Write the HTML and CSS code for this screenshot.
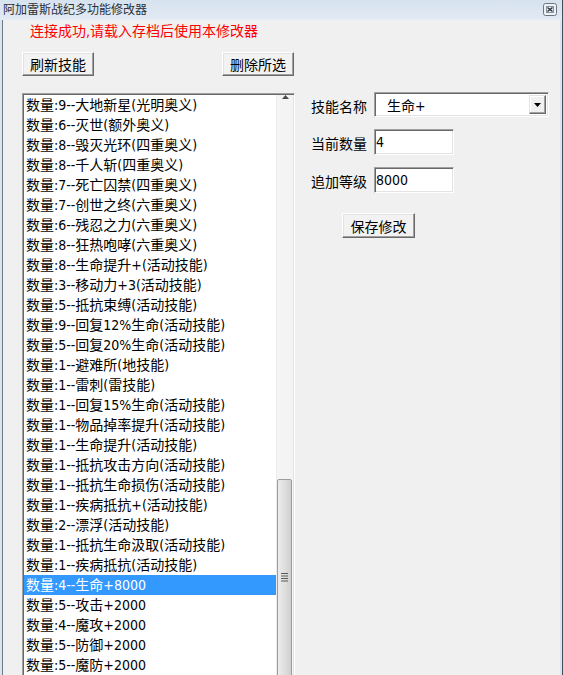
FILE: index.html
```html
<!DOCTYPE html>
<html lang="zh-CN">
<head>
    <meta charset="UTF-8">
    <title>阿加雷斯战纪多功能修改器</title>
    <link rel="stylesheet" href="styles.css">
</head>
<body>
    <div class="window">
        <div class="titlebar">
            <span class="title">阿加雷斯战纪多功能修改器</span>
            <span class="close-btn">
                <svg width="14" height="13" viewBox="0 0 14 13">
                    <rect x="0.5" y="0.5" width="13" height="12" rx="2" fill="#eef2f6" stroke="#6c7682"/>
                    <rect x="3.5" y="3.5" width="7" height="6" fill="none" stroke="#8a939d"/>
                    <path d="M4.5 4.5 L9.5 8.5 M9.5 4.5 L4.5 8.5" stroke="#2f3840" stroke-width="1.6"/>
                </svg>
            </span>
        </div>
        <div class="client">
            <p class="notice">连接成功,请载入存档后使用本修改器</p>
            <div class="toolbar">
                <button class="btn">刷新技能</button>
                <button class="btn">删除所选</button>
            </div>
            <div class="main">
                <div class="listbox">
                    <ul class="items">
                        <li>数量:9--大地新星(光明奥义)</li>
                        <li>数量:6--灭世(额外奥义)</li>
                        <li>数量:8--毁灭光环(四重奥义)</li>
                        <li>数量:8--千人斩(四重奥义)</li>
                        <li>数量:7--死亡囚禁(四重奥义)</li>
                        <li>数量:7--创世之终(六重奥义)</li>
                        <li>数量:6--残忍之力(六重奥义)</li>
                        <li>数量:8--狂热咆哮(六重奥义)</li>
                        <li>数量:8--生命提升+(活动技能)</li>
                        <li>数量:3--移动力+3(活动技能)</li>
                        <li>数量:5--抵抗束缚(活动技能)</li>
                        <li>数量:9--回复12%生命(活动技能)</li>
                        <li>数量:5--回复20%生命(活动技能)</li>
                        <li>数量:1--避难所(地技能)</li>
                        <li>数量:1--雷刺(雷技能)</li>
                        <li>数量:1--回复15%生命(活动技能)</li>
                        <li>数量:1--物品掉率提升(活动技能)</li>
                        <li>数量:1--生命提升(活动技能)</li>
                        <li>数量:1--抵抗攻击方向(活动技能)</li>
                        <li>数量:1--抵抗生命损伤(活动技能)</li>
                        <li>数量:1--疾病抵抗+(活动技能)</li>
                        <li>数量:2--漂浮(活动技能)</li>
                        <li>数量:1--抵抗生命汲取(活动技能)</li>
                        <li>数量:1--疾病抵抗(活动技能)</li>
                        <li class="selected">数量:4--生命+8000</li>
                        <li>数量:5--攻击+2000</li>
                        <li>数量:4--魔攻+2000</li>
                        <li>数量:5--防御+2000</li>
                        <li>数量:5--魔防+2000</li>
                    </ul>
                    <div class="scrollbar">
                        <div class="arrow-up">
                            <svg width="7" height="4" viewBox="0 0 7 4"><path d="M0 4 L3.5 0 L7 4 Z" fill="#4a4a4a"/></svg>
                        </div>
                        <div class="track">
                            <div class="thumb">
                                <svg width="7" height="10" viewBox="0 0 7 10">
                                    <path d="M0 1.5 H7 M0 4 H7 M0 6.5 H7 M0 9 H7" stroke="#5a5a5a" stroke-width="1"/>
                                </svg>
                            </div>
                        </div>
                    </div>
                </div>
                <div class="editor">
                    <span class="label">技能名称</span>
                    <div class="combo">
                        <span class="combo-text">生命+</span>
                        <span class="combo-btn">
                            <svg width="7" height="4" viewBox="0 0 7 4"><path d="M0 0 L7 0 L3.5 4 Z" fill="#000"/></svg>
                        </span>
                    </div>
                    <span class="label">当前数量</span>
                    <input class="field" type="text" value="4">
                    <span class="label">追加等级</span>
                    <input class="field" type="text" value="8000">
                    <button class="btn save-btn">保存修改</button>
                </div>
            </div>
        </div>
    </div>
</body>
</html>
```

FILE: styles.css
```css
* {
    margin: 0;
    padding: 0;
    box-sizing: border-box;
}

body {
    width: 563px;
    height: 675px;
    overflow: hidden;
    font-family: "DejaVu Sans Condensed", "Noto Sans CJK SC", sans-serif;
    font-size: 14px;
    color: #000;
    background: #f0f0f0;
}

.window {
    display: flex;
    flex-direction: column;
    height: 675px;
    background: #dbe5ef;
    border-right: 1px solid #434d57;
    overflow: hidden;
}

.titlebar {
    height: 20px;
    flex: none;
    display: flex;
    align-items: center;
    justify-content: space-between;
    padding: 0 5px 0 3px;
    background: linear-gradient(to bottom, #d6e2ee, #e3ebf4);
}

.title {
    font-size: 12px;
    line-height: 20px;
    color: #2a3038;
}

.close-btn {
    display: flex;
    margin-top: -1px;
}

.client {
    flex: 1;
    margin: 0 2px 0 2px;
    border-left: 1px solid #6f7a85;
    padding-left: 19px;
    background: #f0f0f0;
}

.notice {
    color: #ff0000;
    line-height: 22px;
    margin-left: 8px;
}

.toolbar {
    width: 272px;
    margin-top: 10px;
    display: flex;
    justify-content: space-between;
}

.btn {
    width: 72px;
    height: 24px;
    font-family: inherit;
    font-size: 14px;
    color: #000;
    background: #f2f2f2;
    border: 1px solid;
    border-color: #fff #696969 #696969 #fff;
    box-shadow: inset -1px -1px 0 #a0a0a0, inset 1px 1px 0 #e3e3e3;
}

.main {
    display: flex;
    margin-top: 16px;
}

.listbox {
    width: 273px;
    height: 620px;
    margin-top: 1px;
    display: flex;
    background: #fff;
    border: 1px solid;
    border-color: #a0a0a0 #fff #fff #a0a0a0;
    box-shadow: inset 1px 1px 0 #696969, inset -1px -1px 0 #e3e3e3;
    padding: 1px;
}

.items {
    list-style: none;
    flex: 1;
}

.items li {
    height: 20px;
    line-height: 20px;
    padding-left: 2px;
    white-space: nowrap;
}

.items li.selected {
    background: #3399ff;
    color: #fff;
}

.scrollbar {
    width: 17px;
    display: flex;
    flex-direction: column;
    background: #f4f4f4;
    border-left: 1px solid #ececec;
}

.arrow-up {
    height: 17px;
    display: flex;
    align-items: center;
    justify-content: center;
}

.track {
    flex: 1;
    padding-top: 380px;
}

.thumb {
    width: 15px;
    height: 300px;
    border: 1px solid #9c9c9c;
    border-radius: 2px;
    background: linear-gradient(to right, #ececec, #dcdcdc 60%, #cfcfcf);
    display: flex;
    justify-content: center;
    padding-top: 92px;
}

.editor {
    margin-left: 16px;
    display: grid;
    grid-template-columns: 63px auto;
    align-items: center;
    align-content: start;
    row-gap: 12px;
}

.label {
    white-space: nowrap;
    padding-top: 2px;
}

.combo {
    width: 175px;
    height: 25px;
    display: flex;
    align-items: center;
    background: #fff;
    border: 1px solid;
    border-color: #a0a0a0 #fff #fff #a0a0a0;
    box-shadow: inset 1px 1px 0 #696969, inset -1px -1px 0 #e3e3e3;
    padding: 2px;
}

.combo-text {
    flex: 1;
    padding-left: 10px;
}

.combo-btn {
    width: 17px;
    height: 19px;
    display: flex;
    align-items: center;
    justify-content: center;
    background: #f0f0f0;
    border: 1px solid;
    border-color: #e3e3e3 #696969 #696969 #e3e3e3;
    box-shadow: inset -1px -1px 0 #a0a0a0, inset 1px 1px 0 #fff;
}

.field {
    width: 80px;
    height: 26px;
    font-family: inherit;
    font-size: 14px;
    padding: 0 1px;
    color: #000;
    background: #fff;
    border: 1px solid;
    border-color: #a0a0a0 #fff #fff #a0a0a0;
    box-shadow: inset 1px 1px 0 #696969, inset -1px -1px 0 #e3e3e3;
    outline: none;
}

.save-btn {
    grid-column: 1 / span 2;
    width: 73px;
    height: 25px;
    margin: 8px 0 0 31px;
}
```
